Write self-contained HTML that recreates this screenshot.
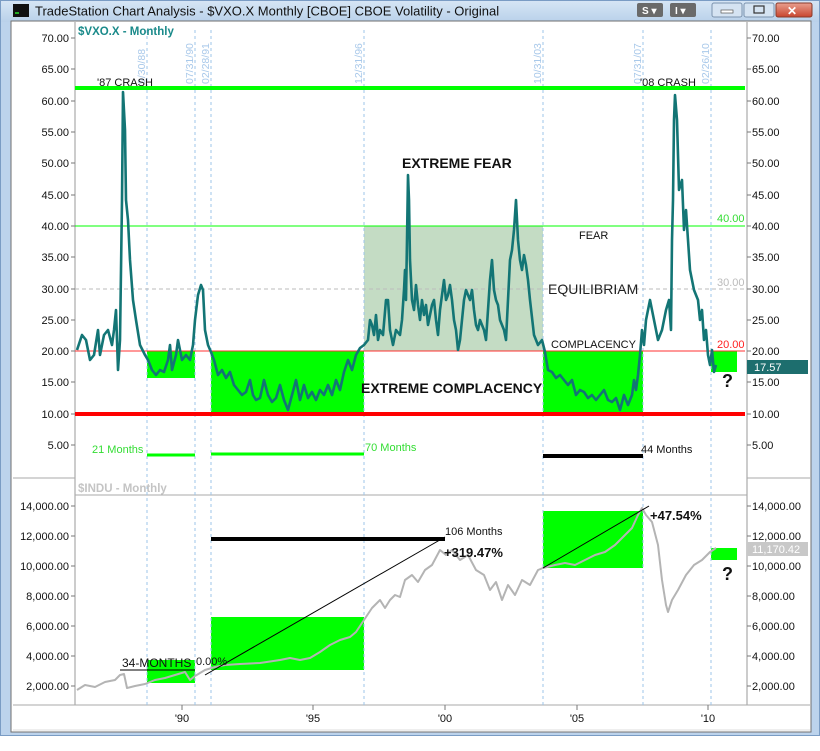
<!DOCTYPE html>
<html><head><meta charset="utf-8"><style>
html,body{margin:0;padding:0;background:#fff;}
svg{display:block;font-family:"Liberation Sans",Arial,sans-serif;}
</style></head><body>
<svg width="820" height="751" viewBox="0 0 820 751" xmlns="http://www.w3.org/2000/svg">
<defs>
<linearGradient id="tb" x1="0" y1="0" x2="0" y2="1"><stop offset="0" stop-color="#d7e6f5"/><stop offset="1" stop-color="#b9d1ea"/></linearGradient>
<linearGradient id="xb" x1="0" y1="0" x2="0" y2="1"><stop offset="0" stop-color="#e9a08f"/><stop offset="1" stop-color="#c8452f"/></linearGradient>
</defs>
<rect x="0" y="0" width="820" height="736" fill="#bcd3ec"/>
<rect x="0" y="0" width="820" height="22" fill="url(#tb)"/>
<rect x="0.5" y="0.5" width="819" height="735" fill="none" stroke="#7a9cc4"/>
<rect x="11" y="21" width="800" height="711" fill="#fff" stroke="#6f6f6f"/>
<rect x="13" y="4" width="16" height="13" fill="#111"/><rect x="15" y="12" width="4" height="2" fill="#2a2"/>
<text x="35" y="15.5" font-size="13" fill="#111">TradeStation Chart Analysis - $VXO.X Monthly [CBOE] CBOE Volatility - Original</text>
<rect x="637" y="3" width="26" height="14" rx="2" fill="#6a6a6a"/><text x="642" y="14" font-size="10" fill="#fff" font-weight="bold">S ▾</text>
<rect x="670" y="3" width="26" height="14" rx="2" fill="#6a6a6a"/><text x="675" y="14" font-size="10" fill="#fff" font-weight="bold">I ▾</text>
<rect x="712" y="3" width="30" height="14" rx="2" fill="#d5e3f2" stroke="#7c93ae"/><rect x="721" y="10" width="12" height="3" fill="#fff" stroke="#555" stroke-width=".7"/>
<rect x="744" y="3" width="30" height="14" rx="2" fill="#d5e3f2" stroke="#7c93ae"/><rect x="754" y="6" width="10" height="7" fill="none" stroke="#333" stroke-width="1.2"/>
<rect x="776" y="3" width="36" height="14" rx="2" fill="url(#xb)" stroke="#8a3a2a"/><text x="787" y="15" font-size="12" fill="#fff" font-weight="bold">✕</text>
<line x1="75" y1="22" x2="75" y2="705" stroke="#999"/>
<line x1="747" y1="22" x2="747" y2="705" stroke="#999"/>
<line x1="13" y1="478" x2="75" y2="478" stroke="#aaa"/>
<line x1="747" y1="478" x2="810" y2="478" stroke="#aaa"/>
<line x1="75" y1="495" x2="747" y2="495" stroke="#aaa"/>
<line x1="13" y1="705" x2="810" y2="705" stroke="#aaa"/>
<line x1="13" y1="730" x2="810" y2="730" stroke="#ddd"/>
<rect x="364" y="226" width="179" height="125" fill="#c4dcc4"/>
<g fill="#00ff00">
<rect x="147" y="351" width="48" height="27"/>
<rect x="211" y="351" width="153" height="63"/>
<rect x="543" y="351" width="100" height="63"/>
<rect x="711" y="351" width="26" height="21"/>
<rect x="147" y="660" width="48" height="23"/>
<rect x="211" y="617" width="153" height="53"/>
<rect x="543" y="511" width="100" height="57"/>
<rect x="711" y="548" width="26" height="12"/>
</g>
<g stroke="#9cc4ea" stroke-dasharray="3,3" stroke-width="1">
<line x1="147" y1="30" x2="147" y2="705"/><line x1="195" y1="30" x2="195" y2="705"/><line x1="211" y1="30" x2="211" y2="705"/><line x1="364" y1="30" x2="364" y2="705"/><line x1="543" y1="30" x2="543" y2="705"/><line x1="643" y1="30" x2="643" y2="705"/><line x1="711" y1="30" x2="711" y2="705"/>
</g>
<g font-size="10.5" fill="#a9c9ea">
<text transform="translate(145,84) rotate(-90)">9/30/88</text>
<text transform="translate(193,84) rotate(-90)">07/31/90</text>
<text transform="translate(209,84) rotate(-90)">02/28/91</text>
<text transform="translate(362,84) rotate(-90)">12/31/96</text>
<text transform="translate(541,84) rotate(-90)">10/31/03</text>
<text transform="translate(641,84) rotate(-90)">07/31/07</text>
<text transform="translate(709,84) rotate(-90)">02/26/10</text>
</g>
<line x1="75" y1="88" x2="745" y2="88" stroke="#00ff00" stroke-width="4"/>
<line x1="75" y1="226" x2="745" y2="226" stroke="#00ff00" stroke-width="1"/>
<line x1="75" y1="289" x2="745" y2="289" stroke="#bbb" stroke-dasharray="4,3"/>
<line x1="75" y1="351" x2="745" y2="351" stroke="#ff3030" stroke-width="1"/>
<line x1="75" y1="414" x2="745" y2="414" stroke="#ff0000" stroke-width="4"/>
<line x1="147" y1="455" x2="195" y2="455" stroke="#00ff00" stroke-width="3"/>
<line x1="211" y1="454" x2="364" y2="454" stroke="#00ff00" stroke-width="3"/>
<line x1="543" y1="456" x2="643" y2="456" stroke="#000" stroke-width="4"/>
<line x1="211" y1="539" x2="445" y2="539" stroke="#000" stroke-width="4"/>
<polyline fill="none" stroke="#137575" stroke-width="2.6" stroke-linejoin="round" points="77,350 82,335 86,340 90,360 94,355 98,330 100,355 104,335 108,330 112,345 114,330 116,310 118,370 120,340 122,200 123,92 125,130 126,200 128,220 130,260 133,300 136,320 140,345 145,355 148,360 152,370 156,375 160,370 164,372 168,360 170,345 172,370 176,355 178,340 182,360 186,355 190,360 193,345 195,320 198,295 201,285 203,290 205,330 208,345 211,352 214,360 218,375 222,370 226,378 230,372 234,385 238,390 242,395 246,392 250,380 253,395 256,400 260,398 264,380 268,395 272,402 276,398 280,385 284,400 288,410 292,395 296,380 300,400 304,385 308,398 312,392 316,400 320,390 324,395 328,385 332,395 336,380 340,390 344,372 348,360 352,370 356,355 360,348 364,345 368,340 370,320 372,325 374,335 376,315 378,340 380,330 383,335 386,300 388,300 390,330 393,345 396,330 400,335 402,320 404,290 405,270 406,300 407,240 408,175 409,200 410,260 412,300 414,310 416,285 418,305 420,320 422,300 424,315 426,305 428,325 430,315 432,305 434,300 436,320 438,335 440,310 442,295 444,280 446,300 448,295 450,285 452,300 454,320 456,330 458,350 460,340 462,320 464,300 466,290 468,295 470,300 472,290 474,310 476,325 478,330 480,320 484,330 486,340 488,310 490,280 492,260 494,290 496,300 498,305 500,320 504,330 506,340 508,300 510,260 512,250 514,230 516,200 518,240 520,260 522,270 524,255 526,265 528,280 530,300 534,335 538,345 542,340 545,352 548,370 552,372 556,378 560,375 564,380 568,385 572,380 576,395 580,390 584,392 588,398 592,395 596,400 600,395 604,390 608,400 612,402 616,398 620,410 624,395 628,405 632,395 634,380 636,390 638,375 640,355 642,330 644,345 646,320 650,300 654,320 658,340 662,330 666,310 669,300 671,330 672,240 673,200 674,120 675,95 677,120 679,190 682,180 684,230 686,210 690,270 694,290 698,300 700,320 702,310 704,340 706,330 708,355 710,365 712,350 714,372 716,365"/>
<polyline fill="none" stroke="#b4b4b4" stroke-width="2" stroke-linejoin="round" points="77,690 85,685 95,687 105,682 115,680 120,675 124,674 127,688 135,686 145,684 155,680 165,678 175,675 185,672 190,680 195,676 205,670 215,667 225,665 240,664 260,663 280,660 290,658 300,660 310,658 320,652 330,645 340,640 350,637 356,632 364,620 372,608 380,600 385,608 390,600 395,595 400,597 405,580 412,575 418,582 425,570 432,565 440,550 446,555 452,550 460,560 468,555 476,570 484,575 490,590 496,582 502,600 508,585 515,595 522,580 530,585 538,570 543,568 555,565 565,563 575,565 585,560 595,555 605,552 615,545 625,535 632,528 638,515 642,508 646,515 652,522 658,545 662,580 666,605 668,612 672,600 678,590 686,575 694,565 702,560 710,552 716,548"/>
<line x1="205" y1="675" x2="445" y2="537" stroke="#000" stroke-width="1"/>
<line x1="543" y1="568" x2="649" y2="506" stroke="#000" stroke-width="1"/>
<line x1="120" y1="670" x2="195" y2="670" stroke="#000" stroke-width="1"/>
<text x="78" y="35" font-size="11.5" font-weight="bold" fill="#1a8a8a">$VXO.X - Monthly</text>
<text x="78" y="492" font-size="11.5" font-weight="bold" fill="#c4c4c4">$INDU - Monthly</text>
<g font-size="11" fill="#111">
<text x="97" y="86">'87 CRASH</text>
<text x="640" y="86">'08 CRASH</text>
<text x="579" y="239">FEAR</text>
<text x="551" y="348">COMPLACENCY</text>
<text x="641" y="453">44 Months</text>
<text x="445" y="535">106 Months</text>
<text x="122" y="667" font-size="12">34-MONTHS</text>
<text x="196" y="665">0.00%</text>
</g>
<text x="92" y="453" font-size="11" fill="#33dd33">21 Months</text>
<text x="365" y="451" font-size="11" fill="#33dd33">70 Months</text>
<text x="402" y="168" font-size="14" font-weight="bold" fill="#111">EXTREME FEAR</text>
<text x="548" y="294" font-size="14" fill="#222">EQUILIBRIAM</text>
<text x="361" y="393" font-size="14" font-weight="bold" fill="#111">EXTREME COMPLACENCY</text>
<text x="444" y="557" font-size="13" font-weight="bold" fill="#111">+319.47%</text>
<text x="650" y="520" font-size="13" font-weight="bold" fill="#111">+47.54%</text>
<text x="722" y="387" font-size="18" font-weight="bold" fill="#111">?</text>
<text x="722" y="580" font-size="18" font-weight="bold" fill="#111">?</text>
<text x="717" y="222" font-size="11" fill="#33dd33">40.00</text>
<text x="717" y="286" font-size="11" fill="#bbb">30.00</text>
<text x="717" y="348" font-size="11" fill="#ff2020">20.00</text>
<g font-size="11" fill="#111" text-anchor="end">
<text x="69" y="42">70.00</text><text x="69" y="73">65.00</text><text x="69" y="105">60.00</text><text x="69" y="136">55.00</text><text x="69" y="167">50.00</text><text x="69" y="199">45.00</text><text x="69" y="230">40.00</text><text x="69" y="261">35.00</text><text x="69" y="293">30.00</text><text x="69" y="324">25.00</text><text x="69" y="355">20.00</text><text x="69" y="386">15.00</text><text x="69" y="418">10.00</text><text x="69" y="449">5.00</text>
<text x="69" y="510">14,000.00</text><text x="69" y="540">12,000.00</text><text x="69" y="570">10,000.00</text><text x="69" y="600">8,000.00</text><text x="69" y="630">6,000.00</text><text x="69" y="660">4,000.00</text><text x="69" y="690">2,000.00</text>
</g>
<g stroke="#777">
<path d="M71 38h4M71 69h4M71 101h4M71 132h4M71 163h4M71 195h4M71 226h4M71 257h4M71 289h4M71 320h4M71 351h4M71 382h4M71 414h4M71 445h4M71 506h4M71 536h4M71 566h4M71 596h4M71 626h4M71 656h4M71 686h4"/>
<path d="M747 38h4M747 69h4M747 101h4M747 132h4M747 163h4M747 195h4M747 226h4M747 257h4M747 289h4M747 320h4M747 351h4M747 382h4M747 414h4M747 445h4M747 506h4M747 536h4M747 566h4M747 596h4M747 626h4M747 656h4M747 686h4"/>
<path d="M182 705v5M313 705v5M445 705v5M577 705v5M708 705v5"/>
</g>
<g font-size="11" fill="#111">
<text x="752" y="42">70.00</text><text x="752" y="73">65.00</text><text x="752" y="105">60.00</text><text x="752" y="136">55.00</text><text x="752" y="167">50.00</text><text x="752" y="199">45.00</text><text x="752" y="230">40.00</text><text x="752" y="261">35.00</text><text x="752" y="293">30.00</text><text x="752" y="324">25.00</text><text x="752" y="355">20.00</text><text x="752" y="386">15.00</text><text x="752" y="418">10.00</text><text x="752" y="449">5.00</text>
<text x="752" y="510">14,000.00</text><text x="752" y="540">12,000.00</text><text x="752" y="600">8,000.00</text><text x="752" y="630">6,000.00</text><text x="752" y="660">4,000.00</text><text x="752" y="690">2,000.00</text>
<text x="752" y="570">10,000.00</text>
</g>
<rect x="747" y="360" width="61" height="14" fill="#1d6e6e"/>
<text x="754" y="371" font-size="11" fill="#fff">17.57</text>
<rect x="747" y="542" width="61" height="14" fill="#c8c8c8"/>
<text x="752" y="553" font-size="11" fill="#fff">11,170.42</text>
<g font-size="11" fill="#111" text-anchor="middle">
<text x="182" y="722">'90</text><text x="313" y="722">'95</text><text x="445" y="722">'00</text><text x="577" y="722">'05</text><text x="708" y="722">'10</text>
</g>
</svg>
</body></html>
